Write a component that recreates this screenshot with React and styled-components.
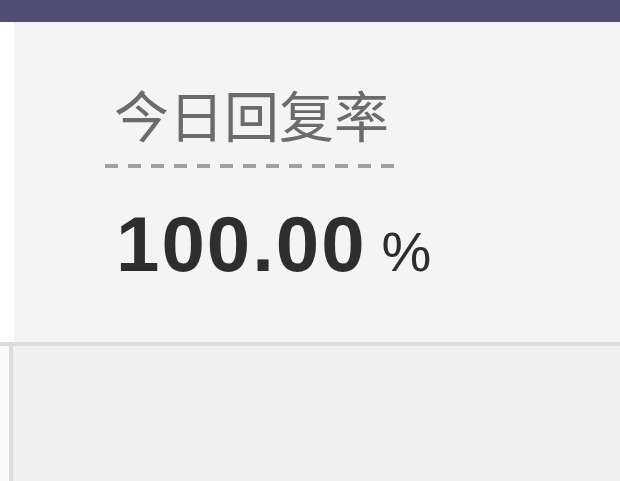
import React from "react";
import styled, { createGlobalStyle } from "styled-components";

const GlobalStyle = createGlobalStyle`
  html, body {
    margin: 0;
    padding: 0;
    background: #f0f0f0;
  }
  #root {
    width: 620px;
    height: 481px;
    overflow: hidden;
  }
`;

const Page = styled.div`
  display: flex;
  flex-direction: column;
  width: 620px;
  height: 481px;
  font-family: "Liberation Sans", "Noto Sans CJK SC", sans-serif;
`;

const TopBar = styled.div`
  height: 22px;
  flex-shrink: 0;
  background: #504e74;
`;

const Row = styled.div`
  display: flex;
  height: ${(p) => p.h};
  flex: ${(p) => (p.grow ? 1 : "none")};
`;

const Strip = styled.div`
  width: ${(p) => p.w}px;
  flex-shrink: 0;
  background: ${(p) => p.bg};
`;

const StatPanel = styled.div`
  flex: 1;
  background: #f4f4f4;
  padding: 60px 0 0 91px;
`;

const StatTitle = styled.div`
  display: inline-block;
  font-family: "Noto Sans CJK SC", sans-serif;
  font-size: 55px;
  line-height: 62px;
  color: #6b6b6b;
  padding: 0 11px 24px 9px;
  background: repeating-linear-gradient(
      to right,
      #a0a0a0 0 13px,
      transparent 13px 23px
    )
    left bottom / 100% 4px no-repeat;
`;

const StatValue = styled.div`
  display: flex;
  align-items: baseline;
  gap: 15px;
  margin: 37px 0 0 11px;
  color: #2e2e2e;
`;

const Number = styled.span`
  font-size: 78px;
  font-weight: bold;
  letter-spacing: 2px;
  line-height: 1;
`;

const Unit = styled.span`
  font-size: 56px;
  line-height: 1;
`;

const Divider = styled.div`
  height: 4px;
  flex-shrink: 0;
  background: #dcdcdc;
`;

const Lower = styled.div`
  flex: 1;
  background: #f0f0f0;
`;

export default function App() {
  return (
    <>
      <GlobalStyle />
      <Page>
        <TopBar />
        <Row h="320px">
          <Strip w={14} bg="#ffffff" />
          <StatPanel>
            <StatTitle>今日回复率</StatTitle>
            <StatValue>
              <Number>100.00</Number>
              <Unit>%</Unit>
            </StatValue>
          </StatPanel>
        </Row>
        <Divider />
        <Row grow>
          <Strip w={9} bg="#fafafa" />
          <Strip w={4} bg="#dcdcdc" />
          <Lower />
        </Row>
      </Page>
    </>
  );
}
